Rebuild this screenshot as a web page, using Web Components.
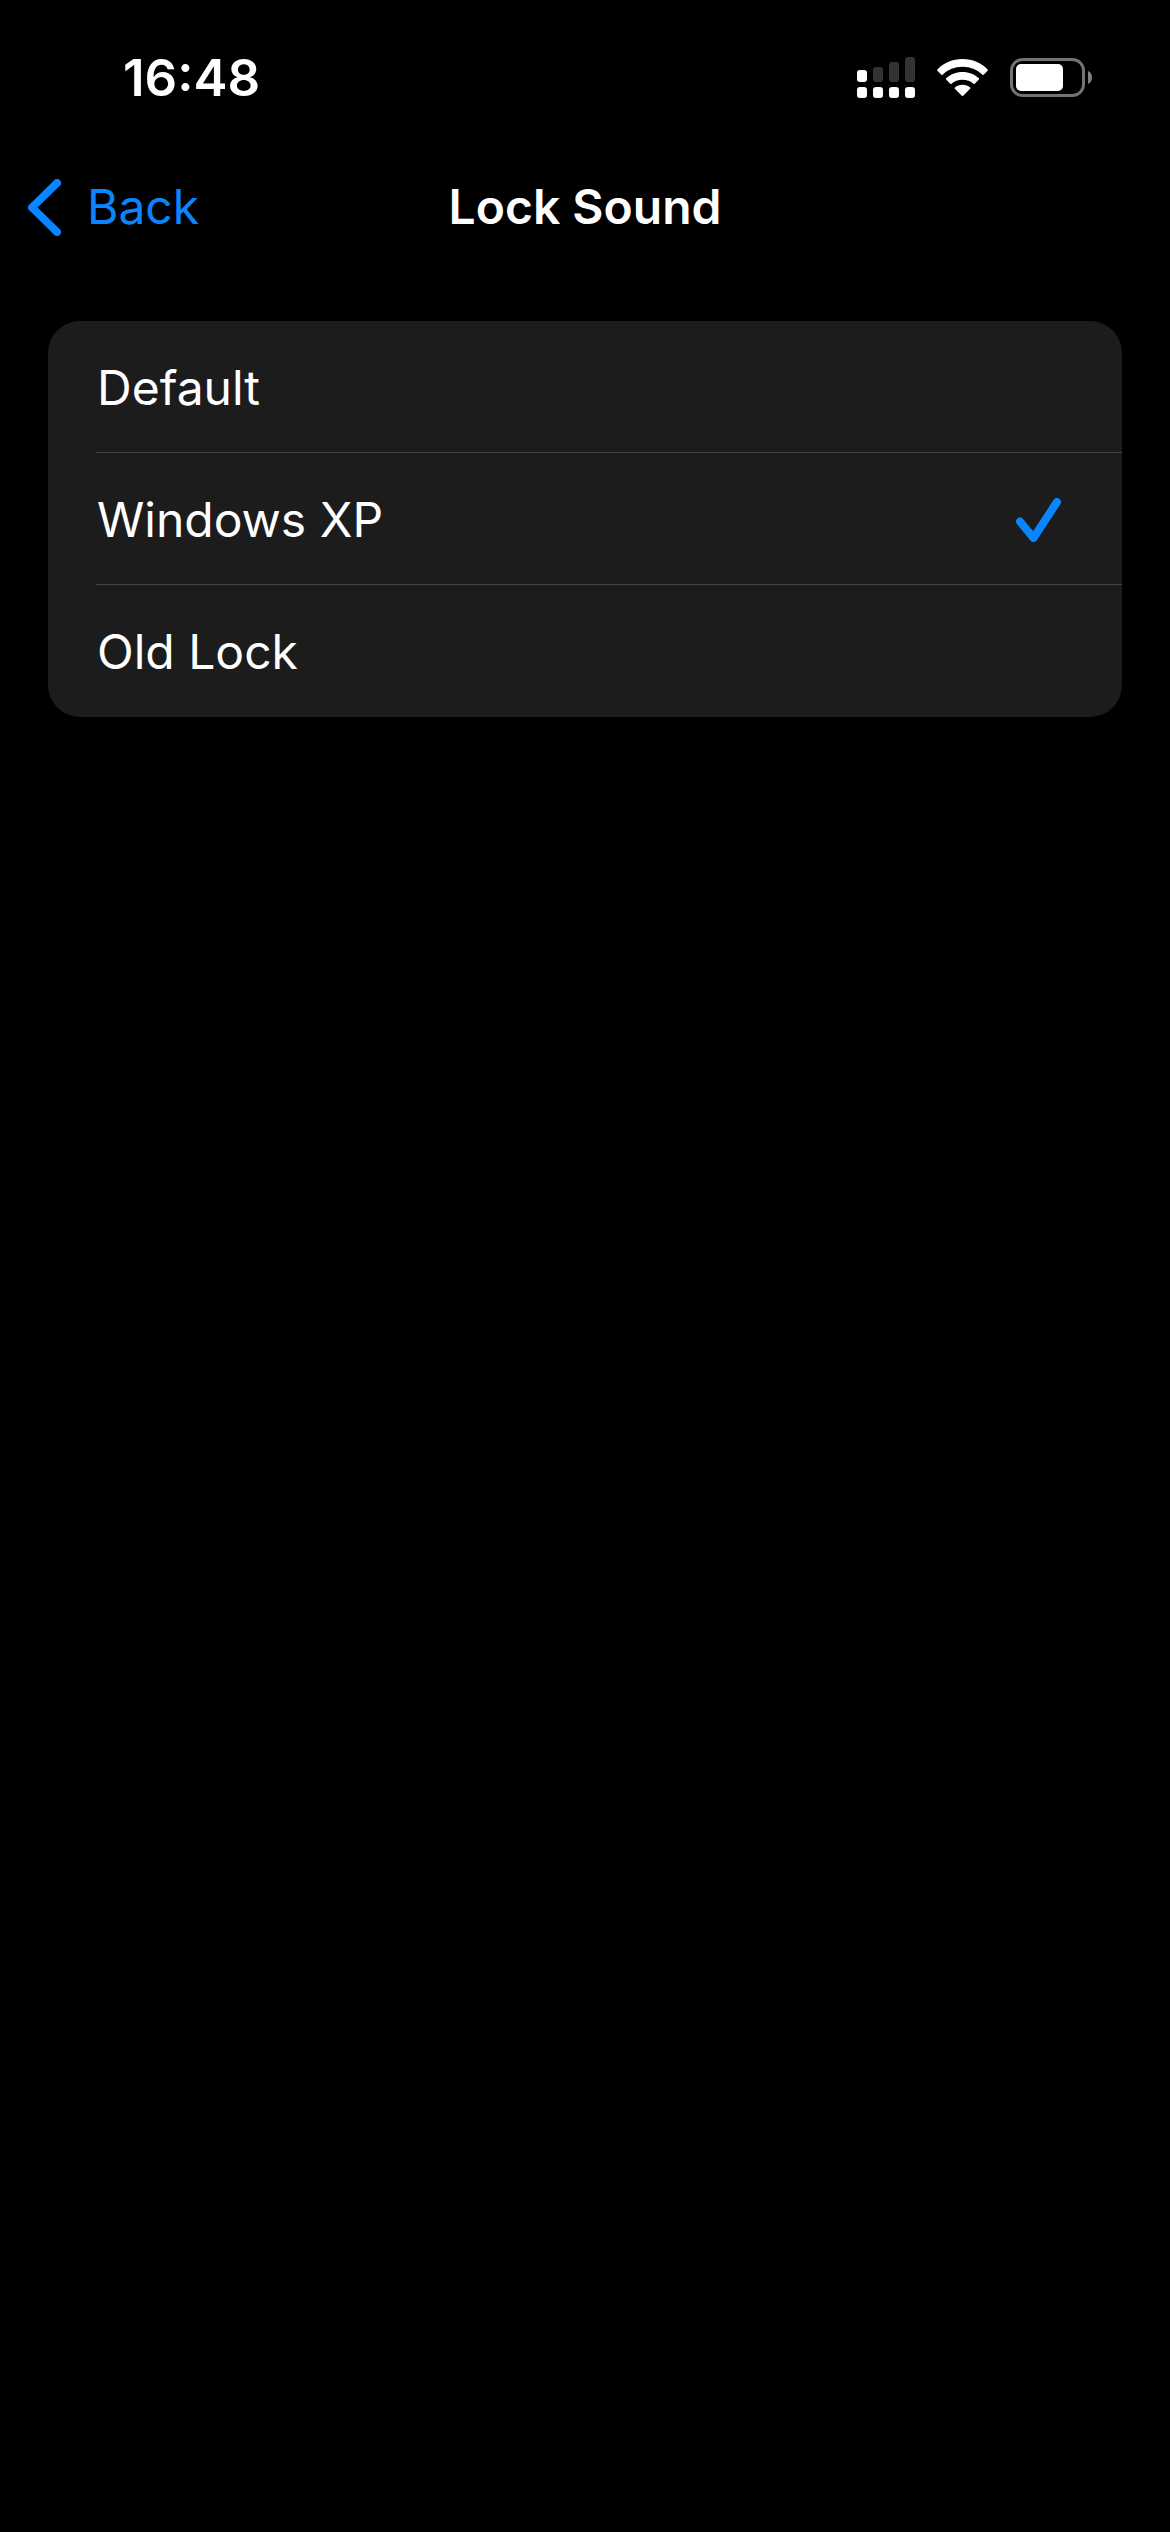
<!DOCTYPE html>
<html lang="en">
<head>
<meta charset="utf-8">
<meta name="viewport" content="width=device-width, initial-scale=1">
<title>Lock Sound</title>
<style>
  html { background: #000; }
  body { margin: 0; color: #fff; font-family: Inter, "Liberation Sans", sans-serif; font-size: 48px; line-height: 60px; }
</style>
</head>
<body>
<settings-page></settings-page>

<template id="status-bar">
  <style>
    :host { display: flex; justify-content: space-between; align-items: center; box-sizing: border-box; height: 141px; padding: 14px 78px 0 123px; }
    time { font-size: 51px; font-weight: 600; }
    .icons { display: flex; align-items: center; gap: 22px; }
    svg { display: block; }
  </style>
  <time><slot></slot></time>
  <div class="icons">
    <svg width="58" height="41" viewBox="0 0 58 41" role="img" aria-label="Cellular signal">
      <g fill="#333"><rect x="16" y="10" width="10" height="15" rx="3"/><rect x="32" y="5" width="10" height="20" rx="3"/><rect x="48" y="0" width="10" height="25" rx="3"/></g>
      <g fill="#fff"><rect x="0" y="13" width="10" height="12" rx="3"/><rect x="0" y="30" width="10" height="11" rx="3"/><rect x="16" y="30" width="10" height="11" rx="3"/><rect x="32" y="30" width="10" height="11" rx="3"/><rect x="48" y="30" width="10" height="11" rx="3"/></g>
    </svg>
    <svg width="51" height="37" viewBox="0 0 51 37" fill="#fff" role="img" aria-label="Wi-Fi">
      <path d="M25.500 0C35.500 0 44.300 4 50.600 10.400Q51.200 11 50.600 11.700L46.600 15.700Q46 16.200 45.400 15.700C40.200 10.800 33.200 7.800 25.500 7.800S10.800 10.800 5.600 15.700Q5 16.200 4.400 15.700L.4 11.700Q-.2 11 .4 10.400C6.700 4 15.500 0 25.500 0Z"/>
      <path d="M25.500 12.900C32 12.900 37.700 15.300 41.900 19.300Q42.500 20 41.900 20.600L37.700 24.800Q37.100 25.300 36.500 24.800C33.600 22.200 29.800 20.700 25.500 20.700S17.400 22.200 14.500 24.800Q13.900 25.300 13.300 24.800L9.100 20.600Q8.500 20 9.100 19.300C13.300 15.300 19 12.900 25.500 12.900Z"/>
      <path d="M25.500 25.800C28.500 25.800 31.100 26.800 33.100 28.600Q33.700 29.200 33.100 29.800L26.200 36.700Q25.500 37.300 24.800 36.700L17.900 29.800Q17.300 29.200 17.900 28.600C19.900 26.800 22.500 25.800 25.500 25.800Z"/>
    </svg>
    <svg width="82" height="39" viewBox="0 0 82 39" role="img" aria-label="Battery">
      <rect x="1.500" y="1.500" width="72" height="36" rx="11" fill="none" stroke="#737373" stroke-width="3"/>
      <rect x="6" y="6" width="47" height="27" rx="5" fill="#fff"/>
      <path d="M78 13C80.500 14 82 16.500 82 19.500S80.500 25 78 26Z" fill="#808080"/>
    </svg>
  </div>
</template>

<template id="nav-bar">
  <style>
    :host { display: grid; grid-template-columns: 1fr auto 1fr; align-items: center; height: 132px; padding: 0 28px; }
    button { justify-self: start; display: flex; align-items: center; gap: 26px; margin: 0; padding: 0; border: 0; background: none; color: #0a84ff; font: inherit; cursor: pointer; }
    h1 { margin: 0; font-size: 48px; font-weight: 600; line-height: 60px; }
    svg { display: block; }
  </style>
  <button type="button">
    <svg width="33" height="57" viewBox="0 0 33 57" fill="none" stroke="#0a84ff" stroke-width="8" stroke-linecap="round" stroke-linejoin="round" aria-hidden="true"><path d="M29 4L4 28.500L29 53"/></svg>
    <slot name="back"></slot>
  </button>
  <h1><slot></slot></h1>
</template>

<template id="sound-option">
  <style>
    :host { display: block; padding-left: 48px; }
    label { display: flex; align-items: center; justify-content: space-between; box-sizing: border-box; height: 132px; padding: 3px 61px 0 1px; border-bottom: 1px solid #434345; cursor: pointer; }
    :host(:last-of-type) label { border-bottom-color: transparent; }
    input { appearance: none; width: 0; height: 0; margin: 0; }
    .name { flex: 1; }
    svg { display: block; visibility: hidden; }
    input:checked ~ svg { visibility: visible; }
  </style>
  <label>
    <input type="radio" name="lock-sound">
    <span class="name"><slot></slot></span>
    <svg width="45" height="44" viewBox="0 0 45 44" fill="none" stroke="#0a84ff" stroke-width="8" stroke-linecap="round" stroke-linejoin="round" aria-hidden="true"><path d="M4 23.500L17.500 40L41 4"/></svg>
  </label>
</template>

<template id="option-group">
  <style>
    :host { display: block; margin: 48px; border-radius: 32px; background: #1c1c1c; overflow: hidden; }
  </style>
  <slot></slot>
</template>

<template id="settings-page">
  <style>
    :host { display: block; min-height: 100vh; background: #000; }
    main { display: flow-root; }
  </style>
  <status-bar>16:48</status-bar>
  <nav-bar><span slot="back">Back</span>Lock Sound</nav-bar>
  <main>
    <option-group role="radiogroup" aria-label="Lock Sound">
      <sound-option>Default</sound-option>
      <sound-option checked>Windows XP</sound-option>
      <sound-option>Old Lock</sound-option>
    </option-group>
  </main>
</template>

<script>
  class TemplateElement extends HTMLElement {
    constructor() {
      super();
      const template = document.getElementById(this.localName);
      this.attachShadow({ mode: "open" }).append(template.content.cloneNode(true));
    }
  }

  class StatusBar extends TemplateElement {}
  class NavBar extends TemplateElement {
    connectedCallback() {
      this.shadowRoot.querySelector("button").onclick = () => history.back();
    }
  }
  class SoundOption extends TemplateElement {
    connectedCallback() {
      const input = this.shadowRoot.querySelector("input");
      input.checked = this.hasAttribute("checked");
      input.onchange = () => this.dispatchEvent(new CustomEvent("pick", { bubbles: true }));
    }
    set checked(value) {
      this.shadowRoot.querySelector("input").checked = value;
    }
  }
  class OptionGroup extends TemplateElement {
    connectedCallback() {
      this.addEventListener("pick", (event) => {
        for (const option of this.children) option.checked = option === event.target;
      });
    }
  }
  class SettingsPage extends TemplateElement {}

  customElements.define("status-bar", StatusBar);
  customElements.define("nav-bar", NavBar);
  customElements.define("sound-option", SoundOption);
  customElements.define("option-group", OptionGroup);
  customElements.define("settings-page", SettingsPage);
</script>
</body>
</html>
